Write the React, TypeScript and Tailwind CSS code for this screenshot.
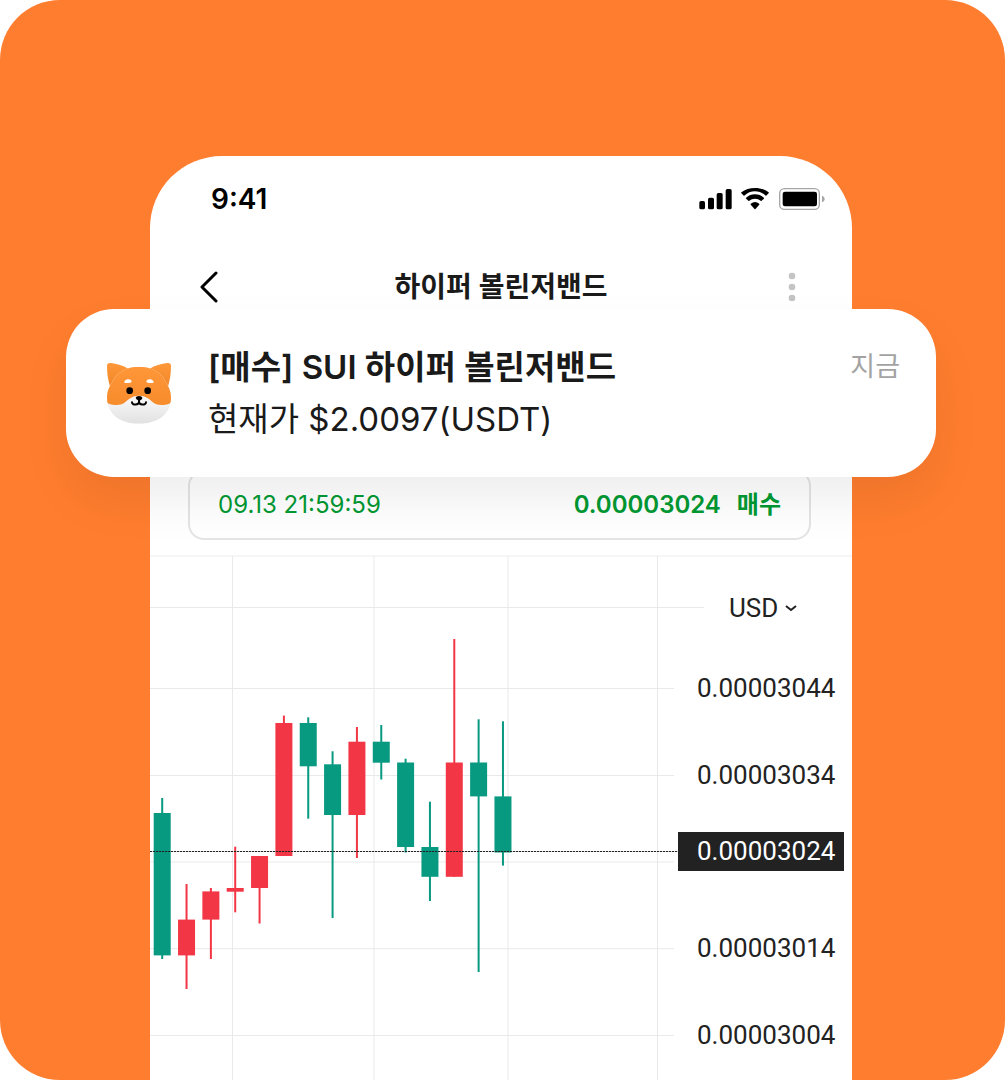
import React from "react";

type Candle = { up: boolean; top: number; bottom: number; high: number; low: number };

const RED = "#f23645";
const GREEN = "#089981";

const candles: Candle[] = [
  { up: true, top: 257, bottom: 399.4, high: 242, low: 403 },
  { up: false, top: 363.6, bottom: 399.4, high: 328, low: 433 },
  { up: false, top: 335.4, bottom: 363.6, high: 332, low: 403 },
  { up: false, top: 332, bottom: 335.7, high: 290.7, low: 356.3 },
  { up: false, top: 300, bottom: 332, high: 300, low: 367.5 },
  { up: false, top: 167, bottom: 300, high: 159.6, low: 300 },
  { up: true, top: 167, bottom: 210.3, high: 161.3, low: 262.7 },
  { up: true, top: 208.3, bottom: 259, high: 195.3, low: 362 },
  { up: false, top: 185.7, bottom: 259, high: 171, low: 302 },
  { up: true, top: 185.7, bottom: 206.7, high: 169, low: 223.5 },
  { up: true, top: 206.5, bottom: 291, high: 202.7, low: 296.5 },
  { up: true, top: 291, bottom: 320.8, high: 245.7, low: 345 },
  { up: false, top: 206.5, bottom: 320.8, high: 83, low: 320.8 },
  { up: true, top: 206.5, bottom: 240.4, high: 163.3, low: 416 },
  { up: true, top: 240.4, bottom: 296.5, high: 165.3, low: 309.6 },
];

const axis = [
  { price: "0.00003044", gap: "mt-[42px]", current: false },
  { price: "0.00003034", gap: "mt-12", current: false },
  { price: "0.00003024", gap: "mt-[37px]", current: true },
  { price: "0.00003014", gap: "mt-[58px]", current: false },
  { price: "0.00003004", gap: "mt-12", current: false },
];

function SignalIcon() {
  return (
    <svg className="h-[22px] w-[33px]" viewBox="58 54 99 66" aria-hidden="true">
      <rect x="59" y="93" width="17" height="25" rx="5" />
      <rect x="85" y="83" width="18" height="35" rx="5" />
      <rect x="111" y="69" width="18" height="49" rx="5" />
      <rect x="138" y="57" width="18" height="61" rx="5" />
    </svg>
  );
}

function WifiIcon() {
  return (
    <svg className="h-[22px] w-[30px]" viewBox="181 54 90 66" aria-hidden="true">
      <path d="M226 64c12 0 23 4.600 31.500 12.600q1.400 1.200 2.700 0l6.600-6.600q1.400-1.500 0-3C256 58 241.500 54 226 54s-30 4-40.800 13q-1.400 1.500 0 3l6.600 6.600q1.300 1.200 2.700 0C203 68.600 214 64 226 64z" />
      <path d="M226 86c6.500 0 12.500 2.400 17.200 6.600q1.400 1.200 2.700 0l6.700-6.700q1.400-1.500-.1-3C245.400 76.500 236 73 226 73s-19.400 3.500-26.500 9.900q-1.500 1.500-.1 3l6.700 6.700q1.300 1.200 2.700 0C213.500 88.400 219.500 86 226 86z" />
      <path d="M238.700 104c.9-.9.900-2.100-.1-2.900a20 20 0 0 0-25.200 0c-1 .8-1 2-.1 2.900l11.300 12.700q1.400 1.400 2.800 0z" />
    </svg>
  );
}

function BatteryIcon() {
  return (
    <svg className="h-[22px] w-[47px]" viewBox="294 54 141 66" aria-hidden="true">
      <rect x="299" y="56" width="119" height="62" rx="14" fill="none" stroke="#a6a6a6" strokeWidth="4" />
      <rect x="308" y="65" width="103" height="44" rx="7" />
      <path d="M426 77c5 2 8 6 8 10s-3 8-8 10z" fill="#a6a6a6" />
    </svg>
  );
}

function DogIcon() {
  return (
    <svg className="h-[63px] w-[66px] shrink-0" viewBox="48 67 198 189" role="img" aria-label="시바견">
      <defs>
        <linearGradient id="ear" x1="0" y1="0" x2="0" y2="1">
          <stop offset="0" stopColor="#ff9838" />
          <stop offset="1" stopColor="#ee8428" />
        </linearGradient>
        <linearGradient id="fur" x1="0" y1="0" x2="0" y2="1">
          <stop offset="0" stopColor="#ff9638" />
          <stop offset="1" stopColor="#f68c2c" />
        </linearGradient>
        <linearGradient id="chin" x1="0" y1="0" x2="0" y2="1">
          <stop offset="0.500" stopColor="#fafafa" />
          <stop offset="1" stopColor="#e0e0e0" />
        </linearGradient>
        <clipPath id="head">
          <path d="M147 81C180 81 211 94 226 124C233 138 243 150 243 174C243 220 207 252 147 252S51 220 51 174C51 150 61 138 68 124C83 94 114 81 147 81Z" />
        </clipPath>
      </defs>
      <path d="M51 79Q51 69 62 70Q91 73 115 87L90 150L61 144Q51 113 51 79Z" fill="url(#ear)" />
      <path d="M243 79Q243 69 232 70Q203 73 179 87L204 150L233 144Q243 113 243 79Z" fill="url(#ear)" />
      <g clipPath="url(#head)">
        <rect x="48" y="78" width="198" height="178" fill="url(#chin)" />
        <path d="M48 78H246V184Q241 195 218 196C193 197 188 186 177 178Q164 168 147 168T117 178C106 186 101 197 76 196Q53 195 48 184Z" fill="url(#fur)" />
      </g>
      <path d="M104 130C101 124 108 119 115 119S126 123 124 128Q122 130 115 130T104 130Z" fill="#fff" />
      <path d="M190 130C193 124 186 119 179 119S168 123 170 128Q172 130 179 130T190 130Z" fill="#fff" />
      <circle cx="119" cy="153" r="10" />
      <circle cx="173" cy="153" r="10" />
      <path d="M137 174Q138 169 147 169T157 174Q157 180 147 183Q138 180 137 174Z" />
      <path d="M147 180V188M126 188C126 197 147 197 147 186C147 197 168 197 168 188" fill="none" stroke="#000" strokeWidth="6" strokeLinecap="round" />
    </svg>
  );
}

function CandleChart() {
  return (
    <svg className="h-[524px] min-w-0 flex-1 overflow-visible" viewBox="0 0 528 524" preserveAspectRatio="xMinYMin meet" role="img" aria-label="가격 차트">
      <g stroke="#e9e9e9" strokeWidth="1">
        {[82.5, 224, 358, 507.5].map((x) => (
          <path key={x} d={`M${x} 0V524`} />
        ))}
        <path d="M0 51.500H554" />
        {[132.5, 219.5, 306, 392.7, 479.5].map((y) => (
          <path key={y} d={`M0 ${y}H524`} />
        ))}
      </g>
      {candles.map((c, i) => {
        const x = 3.7 + i * 24.34;
        return (
          <g key={i} fill={c.up ? GREEN : RED}>
            <rect x={x + 7.5} y={c.high} width="2" height={c.low - c.high} />
            <rect x={x} y={c.top} width="17" height={c.bottom - c.top} />
          </g>
        );
      })}
      <path d="M0 295.500H528" stroke="#222" strokeDasharray="2.200 0.800" />
    </svg>
  );
}

export default function App() {
  return (
    <main className="relative min-h-screen overflow-hidden rounded-[60px] bg-[#ff7d2e] pt-[156px] pr-[153px] pl-[150px] font-['Inter','Noto_Sans_CJK_KR',sans-serif] text-[#1a1a1a]">
      <section className="min-h-[924px] rounded-t-[72px] bg-white">
        <div className="flex h-[86px] items-center justify-between pr-[27px] pl-[61px] text-black">
          <time className="text-[28px] leading-9 font-semibold">9:41</time>
          <div className="flex items-center gap-2">
            <SignalIcon />
            <WifiIcon />
            <BatteryIcon />
          </div>
        </div>

        <header className="flex h-[90px] items-center justify-between px-11">
          <button type="button" aria-label="뒤로" className="flex h-10 w-8 items-center justify-center">
            <svg className="h-8 w-5" viewBox="0 0 20 32" fill="none" stroke="#000" strokeWidth="3" strokeLinecap="round" strokeLinejoin="round">
              <path d="M16 2L2 16L16 30" />
            </svg>
          </button>
          <h1 className="text-[28px] leading-[42px] font-semibold">하이퍼 볼린저밴드</h1>
          <button type="button" aria-label="더보기" className="flex h-10 w-8 items-center justify-center">
            <svg className="h-[30px] w-2" viewBox="0 0 8 30" fill="#c4c4c4">
              <circle cx="4" cy="4" r="3.300" />
              <circle cx="4" cy="15" r="3.300" />
              <circle cx="4" cy="26" r="3.300" />
            </svg>
          </button>
        </header>

        <div className="border-b-2 border-[#f6f6f6] pt-[138px] pr-[41px] pb-[15px] pl-[38px]">
          <div className="flex h-[70px] items-center justify-between rounded-2xl border-2 border-[#e4e4e4] px-7 text-2xl text-[#009933]">
            <span>09.13 21:59:59</span>
            <span className="flex gap-4 font-semibold">
              <span>0.00003024</span>
              <span>매수</span>
            </span>
          </div>
        </div>

        <div className="-mt-px flex font-['Roboto','Noto_Sans_CJK_KR',sans-serif] text-[26px] text-[#222]">
          <CandleChart />
          <div className="flex w-[174px] shrink-0 flex-col pt-8 pr-2">
            <div className="relative ml-[51px] flex h-[39px] w-[100px] items-center">
              <select aria-label="통화" className="h-full w-full appearance-none bg-transparent leading-8" defaultValue="USD">
                <option>USD</option>
              </select>
              <svg className="pointer-events-none absolute left-14 h-2 w-3" viewBox="0 0 12 8" fill="none" stroke="#222" strokeWidth="2">
                <path d="M1 2L6 6L11 2" />
              </svg>
            </div>
            {axis.map((row) => (
              <div
                key={row.price}
                className={`${row.gap} flex h-[39px] items-center pl-[19px] ${row.current ? "bg-[#222] text-white" : ""}`}
              >
                {row.price}
              </div>
            ))}
          </div>
        </div>
      </section>

      <article className="absolute top-[309px] right-[69px] left-[66px] flex items-center rounded-[48px] bg-white py-8 pr-9 pl-10 shadow-[0_24px_48px_rgba(0,0,0,0.07)]">
        <DogIcon />
        <div className="ml-9 min-w-0 flex-1 text-[33px] leading-[52px]">
          <h2 className="font-semibold">[매수] SUI 하이퍼 볼린저밴드</h2>
          <p>현재가 $2.0097(USDT)</p>
        </div>
        <span className="self-start text-[27px] leading-[52px] text-[#a3a3a3]">지금</span>
      </article>
    </main>
  );
}
